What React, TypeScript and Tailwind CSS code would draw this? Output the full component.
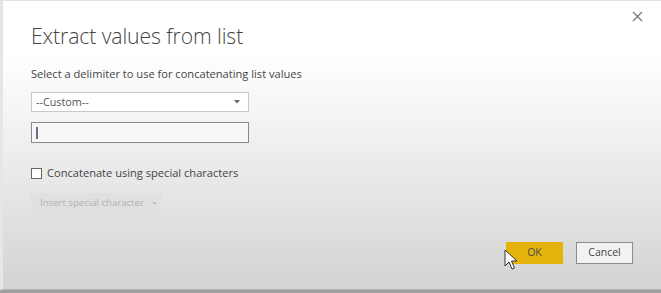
import React from "react";

export default function App() {
  return (
    <div className="relative w-[661px] h-[293px] overflow-hidden bg-[#a0a0a0]" style={{ fontFamily: '"Open Sans", "Noto Sans", sans-serif' }}>
      <div className="absolute left-0 top-0 w-[661px] h-[290px] bg-[linear-gradient(to_bottom,#ffffff_0%,#ffffff_18%,#efefef_50%,#d3d3d3_100%)] border-t-[1px] border-t-[#e2e2e2] border-l-[3px] border-l-[#e6e6e6] border-b border-b-[#b5b5b5]">
        <div className="flex flex-col pl-[28px] pt-[21px]">
          <div className="text-[21.2px] font-light text-[#444] leading-[28px] tracking-[-0.1px]">Extract values from list</div>
          <div className="mt-[16px] text-[11.1px] text-[#444] leading-[16px]">Select a delimiter to use for concatenating list values</div>
          <div className="mt-[10px] w-[218px] h-[20px] border border-[#c8c8c8] bg-white flex items-center justify-between pl-[4px] pr-[8px]">
            <span className="text-[10.8px] text-[#555] leading-none">--Custom--</span>
            <svg width="6" height="4" viewBox="0 0 6 4"><path d="M0 0 L6 0 L3 3.5 Z" fill="#666" /></svg>
          </div>
          <div className="mt-[10px] w-[218px] h-[21px] border-[1.5px] border-[#8a8a8a] bg-[#f7f7f7] flex items-center pl-[4px]">
            <div className="w-[2px] h-[12px] bg-[#7a6a8a]" />
          </div>
          <div className="mt-[22px] flex items-center gap-[5px]">
            <div className="w-[11px] h-[11px] border-[1.5px] border-[#666] bg-white" />
            <span className="text-[11.1px] text-[#444] leading-[16px]">Concatenate using special characters</span>
          </div>
          <div className="mt-[12px] w-[130px] h-[20px] bg-[#e0e0e0] flex items-center pl-[9px] gap-[8px] whitespace-nowrap">
            <span className="text-[9.6px] text-[#b2b2b2] leading-none">Insert special character</span>
            <svg width="5" height="3" viewBox="0 0 6 4"><path d="M0 0 L6 0 L3 3.5 Z" fill="#bbb" /></svg>
          </div>
        </div>
        <div className="absolute right-[28px] top-[241px] flex gap-[13px]">
          <div className="w-[57px] h-[22px] bg-[#e6b30c] flex items-center justify-center text-[10.5px] text-[#4a4a4a]">OK</div>
          <div className="w-[57px] h-[22px] border border-[#8c8c8c] bg-[#f2f2f2] flex items-center justify-center text-[10.5px] text-[#444]">Cancel</div>
        </div>
        <svg className="absolute left-[629px] top-[10px]" width="11" height="11" viewBox="0 0 11 11">
          <path d="M1 1 L10 10 M10 1 L1 10" stroke="#777" strokeWidth="1.2" />
        </svg>
      </div>
      <svg className="absolute left-[504px] top-[249px]" width="14" height="22" viewBox="0 0 14 22">
        <path d="M1 1 L1 17 L5 13 L8 20 L10.5 19 L7.5 12 L13 12 Z" fill="#fff" stroke="#333" strokeWidth="1" strokeLinejoin="round" />
      </svg>
    </div>
  );
}
